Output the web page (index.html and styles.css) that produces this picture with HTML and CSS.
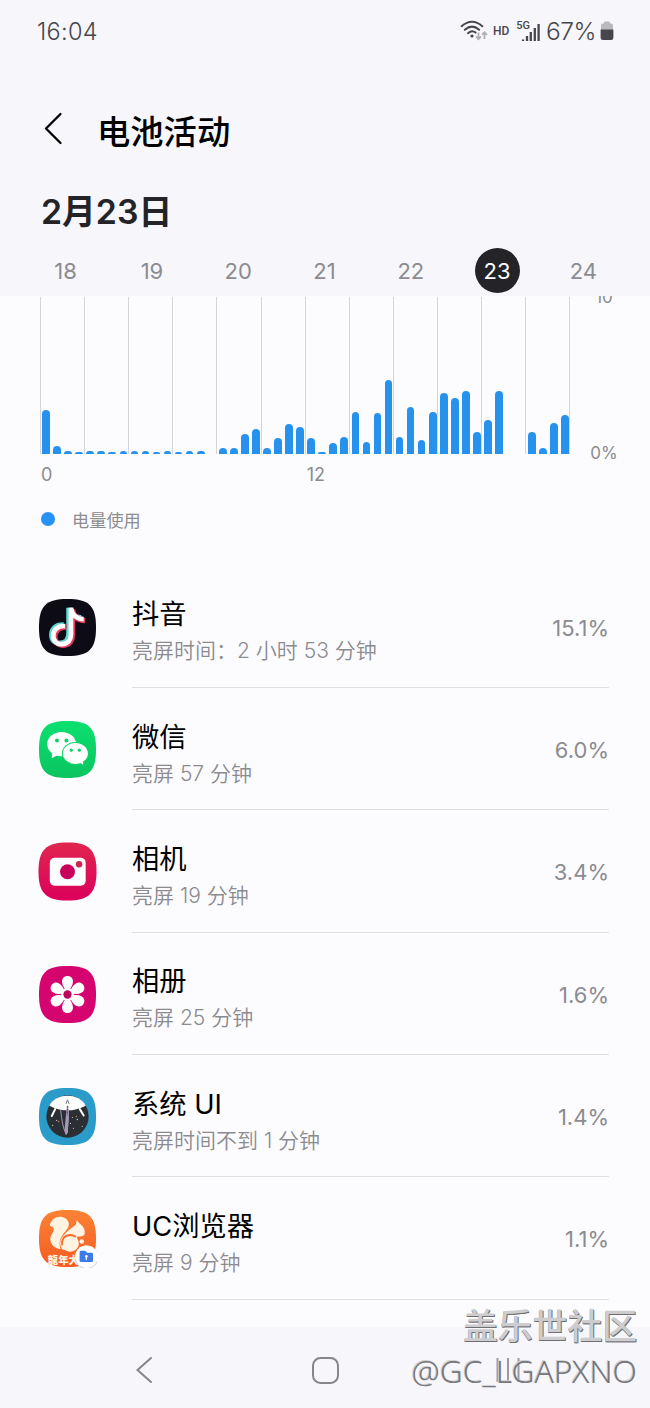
FILE: index.html
```
<!DOCTYPE html>
<html lang="zh-CN">

<head>
    <meta charset="UTF-8">
    <meta name="viewport" content="width=device-width, initial-scale=1.0">
    <title>电池活动</title>
    <link rel="stylesheet" href="styles.css">
</head>

<body>
    <!-- 顶部区域：状态栏、标题、日期 -->
    <header>
        <div class="status-bar">
            <span class="clock">16:04</span>
            <div class="status-icons">
                <svg class="wifi" width="28" height="22" viewBox="0 0 28 22">
                    <g fill="none" stroke="#47474b" stroke-width="2" stroke-linecap="round">
                        <path d="M1.6 6.2Q12 -2.8 22.4 6.2" />
                        <path d="M4.8 9.8Q12 3.4 19.2 9.8" />
                        <path d="M8 13.2Q12 9.6 15.6 12.6" />
                    </g>
                    <circle cx="12" cy="16" r="1.6" fill="#47474b" />
                    <path d="M18.5 12.5v6M16 16.5l2.5 2.6l2.5-2.6M24.5 19v-6M22 14.8l2.5-2.6l2.5 2.6" fill="none" stroke="#aeaeb3" stroke-width="1.8" />
                </svg>
                <span class="hd">HD</span>
                <div class="signal">
                    <span class="net">5G</span>
                    <svg width="19" height="19" viewBox="0 0 19 19">
                        <path d="M2 18v-1.500M6 18v-5M9.800 18V9M13.800 18V5M17.600 18V1" stroke="#47474b" stroke-width="2.300" />
                    </svg>
                </div>
                <span class="percent">67%</span>
                <svg class="battery" width="14" height="20" viewBox="0 0 14 20">
                    <path d="M4 2.5V1.5Q4 .5 5 .5H9Q10 .5 10 1.5V2.5H11.5Q13 2.5 13 4V9H1V4Q1 2.5 2.5 2.5Z" fill="#b9b9be" />
                    <path d="M.6 8.6H13.4V16.5Q13.4 19 11 19H3Q.6 19 .6 16.5Z" fill="#47474b" />
                </svg>
            </div>
        </div>
        <div class="title-bar">
            <svg width="20" height="34" viewBox="0 0 20 34">
                <path d="M16.500 2L2 16.500L16.500 31" fill="none" stroke="#000" stroke-width="2.300" stroke-linecap="round" stroke-linejoin="round" />
            </svg>
            <h1>电池活动</h1>
        </div>
        <h2>2月23日</h2>
        <div class="days">
            <span>18</span>
            <span>19</span>
            <span>20</span>
            <span>21</span>
            <span>22</span>
            <span class="selected">23</span>
            <span>24</span>
        </div>
    </header>

    <main>
        <!-- 电量使用图表 -->
        <div class="chart">
            <div class="plot" id="plot"></div>
            <div class="y-axis">
                <span class="max">10</span>
                <span>0%</span>
            </div>
        </div>
        <div class="x-axis">
            <span>0</span>
            <span>12</span>
        </div>
        <div class="legend"><i></i>电量使用</div>

        <!-- 应用列表 -->
        <ul class="app-list">
            <li>
                <svg class="app-icon" viewBox="0 0 60 60">
                    <path d="M30 1C52 1 59 8 59 30S52 59 30 59S1 52 1 30S8 1 30 1Z" fill="#0c0b16" />
                    <g fill="none" stroke-width="5.6">
                        <path d="M26 27.500C18 27 14 32 14 37.500C14 43 18 46.500 23 46C29 45.500 31.500 42 31.500 36V10C32.500 16 37 20 44 20" stroke="#5bd8d3" />
                        <path d="M29 29.500C21 29 17 34 17 39.500C17 45 21 48.500 26 48C32 47.500 35 43 35 38V12C36 18 40 22.500 48 23" stroke="#e5385c" />
                        <path d="M27.500 28.500C19.500 28 15.500 33 15.500 38.500C15.500 44 19.500 47.500 24.500 47C30.500 46.500 33.500 42.500 33.500 37V10C34.500 17 39 21.500 46.500 21.500" stroke="#fff" stroke-width="4.800" />
                    </g>
                </svg>
                <div class="app-row">
                    <div class="app-text">
                        <h3>抖音</h3>
                        <p>亮屏时间：2 小时 53 分钟</p>
                    </div>
                    <span class="usage">15.1%</span>
                </div>
            </li>
            <li>
                <svg class="app-icon" viewBox="0 0 60 60">
                    <linearGradient id="green" x2="0" y2="1">
                        <stop stop-color="#0be070" />
                        <stop offset="1" stop-color="#0ac45f" />
                    </linearGradient>
                    <path d="M30 1C52 1 59 8 59 30S52 59 30 59S1 52 1 30S8 1 30 1Z" fill="url(#green)" />
                    <path d="M14.500 33L14 39L20 35.500Z" fill="#fff" />
                    <ellipse cx="24" cy="24.500" rx="14.700" ry="12.300" fill="#fff" />
                    <ellipse cx="38" cy="34" rx="13.700" ry="11.700" fill="#0cd368" />
                    <ellipse cx="38" cy="34" rx="12.700" ry="10.700" fill="#fff" />
                    <path d="M40 42L46 45.500L45.500 40Z" fill="#fff" />
                    <g fill="#0cd368">
                        <circle cx="19.300" cy="20.800" r="2" />
                        <circle cx="29" cy="20.800" r="2" />
                        <circle cx="33.800" cy="30.700" r="1.600" />
                        <circle cx="42" cy="30.700" r="1.600" />
                    </g>
                </svg>
                <div class="app-row">
                    <div class="app-text">
                        <h3>微信</h3>
                        <p>亮屏 57 分钟</p>
                    </div>
                    <span class="usage">6.0%</span>
                </div>
            </li>
            <li>
                <svg class="app-icon" viewBox="0 0 60 60">
                    <linearGradient id="red" x2="0" y2="1">
                        <stop stop-color="#e0264e" />
                        <stop offset="1" stop-color="#dc005c" />
                    </linearGradient>
                    <path d="M30 .5C52 .5 59.500 8 59.500 30S52 59.500 30 59.500S.5 52 .5 30S8 .5 30 .5Z" fill="url(#red)" />
                    <rect x="12" y="16" width="36.500" height="28.500" rx="5" fill="#fff" />
                    <circle cx="30" cy="30.300" r="7.600" fill="#c9005a" />
                    <circle cx="41.800" cy="22.700" r="3.300" fill="#cf2350" />
                </svg>
                <div class="app-row">
                    <div class="app-text">
                        <h3>相机</h3>
                        <p>亮屏 19 分钟</p>
                    </div>
                    <span class="usage">3.4%</span>
                </div>
            </li>
            <li>
                <svg class="app-icon" viewBox="0 0 60 60">
                    <defs>
                        <path id="petal" d="M30 28C26 23 24.500 20 24.500 16.500C24.500 9.300 35.500 9.300 35.500 16.500C35.500 20 34 23 30 28Z" />
                    </defs>
                    <path d="M30 1C52 1 59 8 59 30S52 59 30 59S1 52 1 30S8 1 30 1Z" fill="#d6046f" />
                    <g fill="#fff">
                        <use href="#petal" />
                        <use href="#petal" transform="rotate(60 30 30)" />
                        <use href="#petal" transform="rotate(120 30 30)" />
                        <use href="#petal" transform="rotate(180 30 30)" />
                        <use href="#petal" transform="rotate(240 30 30)" />
                        <use href="#petal" transform="rotate(300 30 30)" />
                        <circle cx="30" cy="30" r="6.500" />
                    </g>
                    <circle cx="30" cy="30" r="4.200" fill="#bd0660" />
                </svg>
                <div class="app-row">
                    <div class="app-text">
                        <h3>相册</h3>
                        <p>亮屏 25 分钟</p>
                    </div>
                    <span class="usage">1.6%</span>
                </div>
            </li>
            <li>
                <svg class="app-icon" viewBox="0 0 60 60">
                    <path d="M30 1C52 1 59 8 59 30S52 59 30 59S1 52 1 30S8 1 30 1Z" fill="#2b9bc9" />
                    <circle cx="30" cy="30" r="21.500" fill="#2b2f33" />
                    <path d="M11.500 19C18 5.500 42 5.500 48.500 19Q30 28.500 11.500 19Z" fill="#fff" />
                    <path d="M17.500 22.500L14 29.500M42.500 22.500L46.500 29" stroke="#fff" stroke-width="2" stroke-linecap="round" />
                    <path d="M23 23Q24.500 40 28.500 48Q31.500 38 31 23" fill="none" stroke="#a797b9" stroke-width="1" />
                    <path d="M29.300 20H31L30.500 46L28.500 49L27 43Z" fill="#a797b9" />
                    <path d="M28.500 17L30 13L31.500 17" fill="none" stroke="#70747c" stroke-width="1" />
                    <path d="M30 19V29" stroke="#566273" stroke-width="1.200" stroke-dasharray="2 1" />
                    <g fill="#c6d0cb">
                        <circle cx="15" cy="39" r=".7" />
                        <circle cx="19" cy="34" r=".6" />
                        <circle cx="35" cy="31" r=".6" />
                        <circle cx="40" cy="33" r=".7" />
                        <circle cx="36" cy="42" r=".6" />
                        <circle cx="45" cy="40" r=".6" />
                        <circle cx="33" cy="37" r=".6" />
                    </g>
                    <circle cx="21" cy="35" r=".8" fill="#be8255" />
                    <circle cx="39" cy="30" r=".7" fill="#be8255" />
                </svg>
                <div class="app-row">
                    <div class="app-text">
                        <h3>系统 UI</h3>
                        <p>亮屏时间不到 1 分钟</p>
                    </div>
                    <span class="usage">1.4%</span>
                </div>
            </li>
            <li>
                <svg class="app-icon" viewBox="0 0 60 60">
                    <linearGradient id="orange" x2="0" y2="1">
                        <stop stop-color="#fb8334" />
                        <stop offset="1" stop-color="#f55b22" />
                    </linearGradient>
                    <path d="M30 1C52 1 59 8 59 30S52 59 30 59S1 52 1 30S8 1 30 1Z" fill="url(#orange)" />
                    <!-- 松鼠 -->
                    <path d="M12 17C13 9 22 5.500 28 9.500C33 13.500 32 18.500 28 22.500C23 28 20.500 33 23 41C12 39 10.500 30 14.500 25C17.500 20 16 18 12 17Z" fill="#fff3e2" />
                    <path d="M24.500 41C19.500 33 25 27 30.500 22L38.500 16L39.500 11.500L42.500 15C46.500 18 48 21 47.500 25Q47 28.500 41.500 28C39 28 39.500 30 41 32C43 38 39 43.500 32 43.500Z" fill="#fff3e2" />
                    <path d="M24.500 37Q23.500 27.500 32 26.500Q36 26.300 38.500 28.500" fill="none" stroke="#f9702b" stroke-width="2" />
                    <circle cx="44.500" cy="33" r="2.300" fill="#fff3e2" />
                    <text class="banner" x="10" y="55.500">龍年大</text>
                    <circle cx="49.300" cy="49" r="11.800" fill="#c9c9d0" />
                    <circle cx="49.300" cy="48.500" r="11.500" fill="#fff" />
                    <path d="M42.300 44Q42.300 42.500 43.800 42.500H48L50 44.500H54.500Q56 44.500 56 46V52.500Q56 54 54.500 54H43.800Q42.300 54 42.300 52.500Z" fill="#3f7be8" />
                    <path d="M49.200 48.500V51.800" stroke="#fff" stroke-width="1.300" />
                    <circle cx="49.200" cy="48" r="1.300" fill="#fff" />
                </svg>
                <div class="app-row">
                    <div class="app-text">
                        <h3>UC浏览器</h3>
                        <p>亮屏 9 分钟</p>
                    </div>
                    <span class="usage">1.1%</span>
                </div>
            </li>
        </ul>
    </main>

    <!-- 底部导航 -->
    <nav>
        <svg width="18" height="28" viewBox="0 0 18 28">
            <path d="M16 2L2.500 14L16 26" fill="none" stroke="#85858a" stroke-width="2" stroke-linecap="round" />
        </svg>
        <svg width="28" height="28" viewBox="0 0 28 28">
            <rect x="2" y="2" width="25" height="25" rx="7.500" fill="none" stroke="#85858a" stroke-width="2" />
        </svg>
        <svg width="24" height="28" viewBox="0 0 24 28">
            <path d="M1.500 2V26M12 2V26M22.500 2V26" stroke="#9a9a9f" stroke-width="2" />
        </svg>
    </nav>

    <!-- 水印 -->
    <div class="watermark">
        <strong>盖乐世社区</strong>
        <span>@GC_LGAPXNO</span>
    </div>

    <script>
        // 每半小时的耗电量，对应柱子的高度
        const usage = [
            44, 8, 3.5, 2, 3.5, 3.5, 2, 3.5, 3.5, 3.5, 2, 3.5, 2, 3.5, 3.5, 0,
            6, 6, 20.5, 25, 6, 16, 30, 27, 16, 2, 11, 17, 42, 12, 41, 74,
            17, 47, 14, 42, 61, 56.5, 63, 22, 34, 63, 0, 0, 22, 6, 31, 39
        ];
        const plot = document.getElementById("plot");

        usage.forEach(function (value) {
            const bar = document.createElement("span");
            bar.style.height = value + "px";
            plot.appendChild(bar);
        });
    </script>
</body>

</html>
```
FILE: styles.css
```
* {
    box-sizing: border-box;
}

/* 页面基本设置 */
body {
    position: relative;
    display: flex;
    flex-direction: column;
    width: 650px;
    height: 1408px;
    margin: 0;
    overflow: hidden;
    font-family: Inter, "Noto Sans CJK SC", sans-serif;
    color: #8b8b90;
    background-color: #fcfcff;
}

h1, h2, h3, p, ul {
    margin: 0;
    padding: 0;
}

/* 顶部区域，盖住向上滚动的图表 */
header {
    position: relative;
    z-index: 1;
    height: 296px;
    background-color: #f6f6fb;
}

.status-bar {
    display: flex;
    justify-content: space-between;
    height: 62px;
    padding: 0 36px 0 37px;
    align-items: center;
    color: #47474b;
}

.clock {
    font-size: 23.5px;
    font-weight: 300;
    letter-spacing: 0.3px;
}

.status-icons {
    display: flex;
    align-items: center;
}

.hd {
    margin: 0 7px 0 5px;
    font: 500 12px Roboto, sans-serif;
}

.signal {
    display: flex;
    align-items: flex-end;
    height: 22px;
}

.net {
    align-self: flex-start;
    margin-right: -9px;
    font: 500 11px/11px Roboto, sans-serif;
}

.percent {
    margin: 0 4px 0 6px;
    font-size: 24.5px;
    font-weight: 300;
    letter-spacing: -0.5px;
}

.title-bar {
    display: flex;
    align-items: center;
    gap: 33px;
    height: 72px;
    margin: 31px 0 0 44px;
}

.title-bar h1 {
    padding-top: 5px;
    font-size: 33.3px;
    font-weight: 500;
    line-height: 48px;
    color: #000;
}

h2 {
    margin: 23px 0 0 41px;
    font-size: 33.8px;
    font-weight: 600;
    line-height: 48px;
    color: #232328;
}

.days {
    display: grid;
    grid-template-columns: repeat(7, 86.3px);
    justify-items: center;
    margin: 12px 0 0 22.5px;
}

.days span {
    width: 45px;
    height: 45px;
    font-size: 22px;
    line-height: 46px;
    text-align: center;
}

.days .selected {
    border-radius: 50%;
    color: #fff;
    background-color: #232328;
}

/* 图表 */
.chart {
    display: flex;
    height: 158px;
    padding-left: 40px;
}

.plot {
    display: flex;
    align-items: flex-end;
    width: 531px;
    margin-top: 1px;
    padding: 0 0.5px;
    /* 每两小时一条竖线 */
    background: repeating-linear-gradient(to right, #d4d4d9 0 1px, transparent 1px 44.12px);
}

.plot span {
    flex: 1;
    margin: 0 1.7px;
    border-radius: 4px 4px 0 0;
    background-color: #2792ee;
}

.y-axis {
    display: flex;
    flex-direction: column;
    justify-content: space-between;
    align-items: center;
    width: 66px;
    margin: -10px 0 -11px;
    font-size: 17px;
    line-height: 23px;
}

.x-axis {
    display: flex;
    justify-content: space-between;
    width: 284px;
    margin: 9px 0 0 41px;
    font-size: 18px;
    line-height: 24px;
}

.legend {
    display: flex;
    align-items: center;
    gap: 17px;
    margin: 21px 0 0 41px;
    font-size: 17.2px;
    line-height: 26px;
}

.legend i {
    width: 14px;
    height: 14px;
    margin-top: -5px;
    border-radius: 50%;
    background-color: #2792f5;
}

/* 应用列表 */
.app-list {
    margin-top: 31.5px;
    list-style: none;
}

.app-list li {
    display: flex;
    height: 122.35px;
    padding: 0 41px 0 38px;
}

.app-icon {
    width: 59px;
    height: 59px;
    margin: 32px 35px 0 0;
}

.app-row {
    display: flex;
    flex: 1;
    justify-content: space-between;
    align-items: center;
    border-bottom: 1.5px solid #dfdfe5;
}

.app-text h3 {
    padding-top: 12px;
    font-size: 27.3px;
    font-weight: 400;
    line-height: 38px;
    color: #000;
}

.app-text p {
    font-size: 21px;
    font-weight: 350;
    line-height: 34px;
}

.usage {
    padding-top: 3px;
    font-size: 22px;
    font-weight: 400;
}

.banner {
    font: 900 10.5px "Noto Sans CJK SC", sans-serif;
    fill: #fff3e2;
}

/* 底部导航 */
nav {
    display: flex;
    justify-content: space-between;
    align-items: center;
    height: 81px;
    margin-top: auto;
    padding: 5px 130px 0 135px;
    background-color: #f6f6fb;
}

/* 水印，浮在页面右下角 */
.watermark {
    position: absolute;
    right: 13px;
    bottom: 14px;
    display: flex;
    flex-direction: column;
    align-items: flex-end;
}

.watermark strong {
    font-size: 34.8px;
    font-weight: 500;
    line-height: 44px;
    color: #cdcdd0;
    text-shadow: 1px 1px 0 #6f6f73, 0 1px 0 #77777b;
}

.watermark span {
    font: 300 31.8px/46px "Noto Sans", sans-serif;
    color: #77777b;
    text-shadow: -1px -1px 0 #d2d2d4;
}
```
